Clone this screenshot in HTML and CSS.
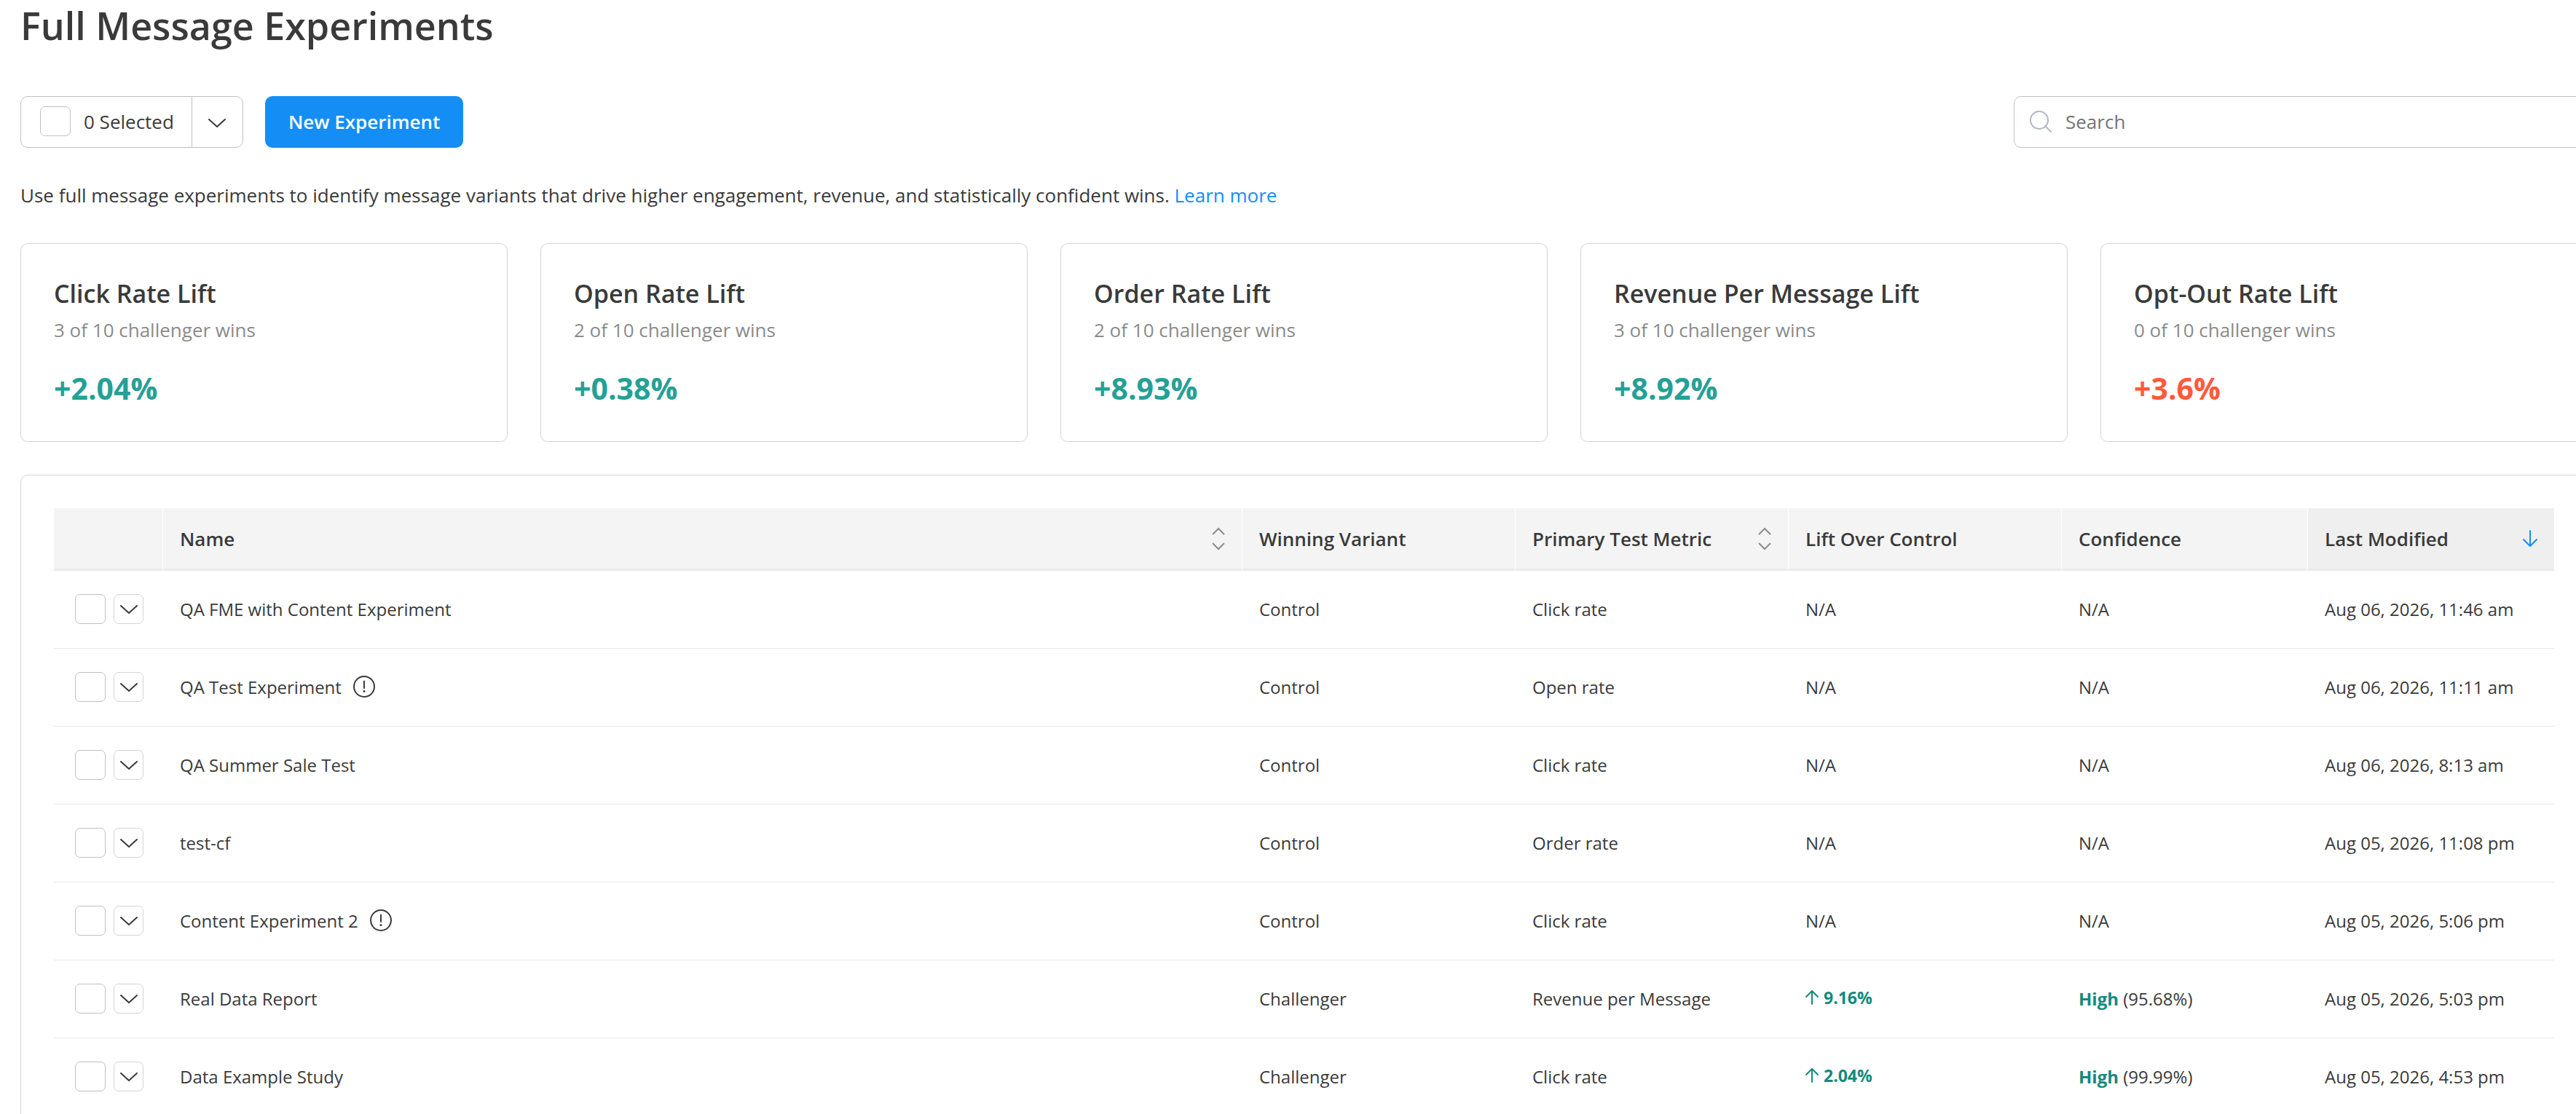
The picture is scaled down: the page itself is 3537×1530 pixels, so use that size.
FILE: index.html
```html
<!DOCTYPE html>
<html lang="en">
<head>
  <meta charset="UTF-8" />
  <meta name="viewport" content="width=device-width, initial-scale=1.0"/>
  <title>Full Message Experiments</title>
  <link rel="stylesheet" href="styles.css">
</head>
<body>
  <!-- shared icons -->
  <svg class="sprite" aria-hidden="true">
    <symbol id="chevron" viewBox="0 0 24 12">
      <path d="M1 1l11 10L23 1" fill="none" stroke="currentColor" stroke-width="2" stroke-linecap="round" stroke-linejoin="round"/>
    </symbol>
    <symbol id="sort" viewBox="0 0 18 32">
      <path d="M1 10l8-8 8 8M1 22l8 8 8-8" fill="none" stroke="currentColor" stroke-width="2"/>
    </symbol>
    <symbol id="arrow-down" viewBox="0 0 20 24">
      <path d="M10 1v21M1 13l9 9 9-9" fill="none" stroke="currentColor" stroke-width="2" stroke-linecap="round" stroke-linejoin="round"/>
    </symbol>
    <symbol id="arrow-up" viewBox="0 0 18 20">
      <path d="M9 19V1M1 9l8-8 8 8" fill="none" stroke="currentColor" stroke-width="2" stroke-linecap="round" stroke-linejoin="round"/>
    </symbol>
    <symbol id="alert" viewBox="0 0 30 30">
      <circle cx="15" cy="15" r="14" fill="none" stroke="currentColor" stroke-width="2"/>
      <path d="M15 7.500v9.500" fill="none" stroke="currentColor" stroke-width="2" stroke-linecap="round"/>
      <circle cx="15" cy="21.500" r="1.500" fill="currentColor"/>
    </symbol>
    <symbol id="search-icon" viewBox="0 0 30 30">
      <circle cx="13" cy="13" r="12" fill="none" stroke="currentColor" stroke-width="2"/>
      <path d="M21 21l8 8" fill="none" stroke="currentColor" stroke-width="2" stroke-linecap="round"/>
    </symbol>
  </svg>

  <main class="page">
    <h1>Full Message Experiments</h1>

    <div class="toolbar">
      <div class="bulk-select">
        <label class="bulk-label"><input type="checkbox" class="checkbox"> 0 Selected</label>
        <button type="button" class="bulk-toggle" aria-label="Bulk actions"><svg class="icon-chevron"><use href="#chevron"/></svg></button>
      </div>
      <button type="button" class="btn-primary">New Experiment</button>
      <label class="search">
        <svg class="icon-search"><use href="#search-icon"/></svg>
        <input type="search" placeholder="Search" aria-label="Search">
      </label>
    </div>

    <p class="intro">Use full message experiments to identify message variants that drive higher engagement, revenue, and statistically confident wins. <a href="#">Learn more</a></p>

    <div class="cards">
      <div class="card">
        <h2>Click Rate Lift</h2>
        <p class="wins">3 of 10 challenger wins</p>
        <p class="value">+2.04%</p>
      </div>
      <div class="card">
        <h2>Open Rate Lift</h2>
        <p class="wins">2 of 10 challenger wins</p>
        <p class="value">+0.38%</p>
      </div>
      <div class="card">
        <h2>Order Rate Lift</h2>
        <p class="wins">2 of 10 challenger wins</p>
        <p class="value">+8.93%</p>
      </div>
      <div class="card">
        <h2>Revenue Per Message Lift</h2>
        <p class="wins">3 of 10 challenger wins</p>
        <p class="value">+8.92%</p>
      </div>
      <div class="card">
        <h2>Opt-Out Rate Lift</h2>
        <p class="wins">0 of 10 challenger wins</p>
        <p class="value negative">+3.6%</p>
      </div>
    </div>

    <div class="panel">
      <table>
        <colgroup>
          <col class="col-actions">
          <col>
          <col class="col-wide">
          <col class="col-wide">
          <col class="col-wide">
          <col class="col-narrow">
          <col class="col-narrow">
        </colgroup>
        <thead>
          <tr>
            <th></th>
            <th><div class="head">Name <svg class="icon-sort"><use href="#sort"/></svg></div></th>
            <th>Winning Variant</th>
            <th><div class="head">Primary Test Metric <svg class="icon-sort"><use href="#sort"/></svg></div></th>
            <th>Lift Over Control</th>
            <th>Confidence</th>
            <th class="sorted"><div class="head">Last Modified <svg class="icon-down"><use href="#arrow-down"/></svg></div></th>
          </tr>
        </thead>
        <tbody>
          <tr>
            <td><div class="actions"><input type="checkbox" class="checkbox" aria-label="Select QA FME with Content Experiment"><button type="button" class="row-toggle" aria-label="Row actions"><svg class="icon-chevron"><use href="#chevron"/></svg></button></div></td>
            <td>QA FME with Content Experiment</td>
            <td>Control</td>
            <td>Click rate</td>
            <td>N/A</td>
            <td>N/A</td>
            <td>Aug 06, 2026, 11:46 am</td>
          </tr>
          <tr>
            <td><div class="actions"><input type="checkbox" class="checkbox" aria-label="Select QA Test Experiment"><button type="button" class="row-toggle" aria-label="Row actions"><svg class="icon-chevron"><use href="#chevron"/></svg></button></div></td>
            <td><div class="name">QA Test Experiment <svg class="icon-alert"><use href="#alert"/></svg></div></td>
            <td>Control</td>
            <td>Open rate</td>
            <td>N/A</td>
            <td>N/A</td>
            <td>Aug 06, 2026, 11:11 am</td>
          </tr>
          <tr>
            <td><div class="actions"><input type="checkbox" class="checkbox" aria-label="Select QA Summer Sale Test"><button type="button" class="row-toggle" aria-label="Row actions"><svg class="icon-chevron"><use href="#chevron"/></svg></button></div></td>
            <td>QA Summer Sale Test</td>
            <td>Control</td>
            <td>Click rate</td>
            <td>N/A</td>
            <td>N/A</td>
            <td>Aug 06, 2026, 8:13 am</td>
          </tr>
          <tr>
            <td><div class="actions"><input type="checkbox" class="checkbox" aria-label="Select test-cf"><button type="button" class="row-toggle" aria-label="Row actions"><svg class="icon-chevron"><use href="#chevron"/></svg></button></div></td>
            <td>test-cf</td>
            <td>Control</td>
            <td>Order rate</td>
            <td>N/A</td>
            <td>N/A</td>
            <td>Aug 05, 2026, 11:08 pm</td>
          </tr>
          <tr>
            <td><div class="actions"><input type="checkbox" class="checkbox" aria-label="Select Content Experiment 2"><button type="button" class="row-toggle" aria-label="Row actions"><svg class="icon-chevron"><use href="#chevron"/></svg></button></div></td>
            <td><div class="name">Content Experiment 2 <svg class="icon-alert"><use href="#alert"/></svg></div></td>
            <td>Control</td>
            <td>Click rate</td>
            <td>N/A</td>
            <td>N/A</td>
            <td>Aug 05, 2026, 5:06 pm</td>
          </tr>
          <tr>
            <td><div class="actions"><input type="checkbox" class="checkbox" aria-label="Select Real Data Report"><button type="button" class="row-toggle" aria-label="Row actions"><svg class="icon-chevron"><use href="#chevron"/></svg></button></div></td>
            <td>Real Data Report</td>
            <td>Challenger</td>
            <td>Revenue per Message</td>
            <td><div class="lift"><svg class="icon-up"><use href="#arrow-up"/></svg> 9.16%</div></td>
            <td><b class="high">High</b> (95.68%)</td>
            <td>Aug 05, 2026, 5:03 pm</td>
          </tr>
          <tr>
            <td><div class="actions"><input type="checkbox" class="checkbox" aria-label="Select Data Example Study"><button type="button" class="row-toggle" aria-label="Row actions"><svg class="icon-chevron"><use href="#chevron"/></svg></button></div></td>
            <td>Data Example Study</td>
            <td>Challenger</td>
            <td>Click rate</td>
            <td><div class="lift"><svg class="icon-up"><use href="#arrow-up"/></svg> 2.04%</div></td>
            <td><b class="high">High</b> (99.99%)</td>
            <td>Aug 05, 2026, 4:53 pm</td>
          </tr>
        </tbody>
      </table>
    </div>
  </main>
</body>
</html>
```
FILE: styles.css
```css
* {
  box-sizing: border-box;
}

body {
  font-family: "Open Sans", sans-serif;
  font-size: 26px;
  margin: 0;
  height: 100vh;
  overflow: hidden;
  background-color: #fff;
  color: #3a3a3a;
}

h1, h2, p {
  margin: 0;
}

button, input {
  font-family: inherit;
  font-size: inherit;
  color: inherit;
}

.sprite {
  display: none;
}

/* content is a little wider than the viewport */
.page {
  margin: 0 -16px 0 28px;
}

h1 {
  font-size: 52px;
  font-weight: 600;
  line-height: 70px;
}

.toolbar {
  display: flex;
  gap: 30px;
  height: 71px;
  margin-top: 62px;
}

.bulk-select {
  display: flex;
  border: 1px solid #c0c0c0;
  border-radius: 10px;
}

.bulk-label {
  display: flex;
  align-items: center;
  gap: 18px;
  padding: 0 24px 2px 26px;
}

.bulk-toggle {
  width: 70px;
  padding: 2px 0 0;
  border: none;
  border-left: 1px solid #c0c0c0;
  background: none;
}

.checkbox {
  appearance: none;
  width: 42px;
  height: 41px;
  margin: 0;
  border: 1px solid #c0c0c0;
  border-radius: 7px;
  background-color: #fff;
}

.btn-primary {
  padding: 0 32px 2px;
  border: none;
  border-radius: 10px;
  background-color: #148ef5;
  color: #fff;
  font-weight: 600;
}

.search {
  display: flex;
  align-items: center;
  gap: 19px;
  width: 788px;
  margin-left: auto;
  padding: 0 21px 2px;
  border: 1px solid #c0c0c0;
  border-radius: 10px;
}

.search input {
  flex: 1;
  padding: 0;
  border: none;
  background: none;
}

.search input::placeholder {
  color: #757575;
}

.intro {
  margin-top: 45px;
  line-height: 40px;
}

.intro a {
  color: #148ef5;
  text-decoration: none;
}

.cards {
  display: grid;
  grid-template-columns: repeat(5, 1fr);
  gap: 45px;
  margin-top: 46px;
}

.card, .panel {
  padding: 45px;
  border: 1px solid #d4d4d4;
  border-radius: 10px;
}

.card h2 {
  font-size: 34px;
  font-weight: 600;
  line-height: 46px;
}

.card .wins {
  margin-top: 9px;
  line-height: 36px;
  color: #8b8b8b;
}

.card .value {
  margin-top: 34px;
  font-size: 41px;
  font-weight: 700;
  line-height: 56px;
  color: #24a196;
}

.card .value.negative {
  color: #ff5a3a;
}

.panel {
  margin-top: 45px;
}

table {
  width: 100%;
  table-layout: fixed;
  border-collapse: separate;
  border-spacing: 0;
}

.col-actions {
  width: 150px;
}

.col-wide {
  width: 375px;
}

.col-narrow {
  width: 338px;
}

th {
  height: 86px;
  padding: 0 23px;
  border-right: 1px solid #fff;
  border-bottom: 3px solid #eaeaea;
  background-color: #f4f4f4;
  font-weight: 600;
  text-align: left;
}

th.sorted {
  border-right: none;
  background-color: #efefef;
}

td {
  height: 107px;
  padding: 0 0 2px 23px;
  border-bottom: 1px solid #eaeaea;
  font-size: 24px;
}

td:first-child {
  padding-left: 29px;
}

.head {
  display: flex;
  align-items: center;
  justify-content: space-between;
}

.actions {
  display: flex;
  gap: 11px;
}

.row-toggle {
  width: 41px;
  height: 41px;
  padding: 2px 0 0;
  border: 1px solid #d4d4d4;
  border-radius: 7px;
  background-color: #fff;
}

.name {
  display: flex;
  align-items: center;
  gap: 16px;
}

.lift {
  display: flex;
  align-items: center;
  gap: 7px;
  padding-bottom: 3px;
  color: #138a7e;
  font-size: 23px;
  font-weight: 700;
}

.high {
  color: #138a7e;
}

.icon-chevron {
  display: block;
  width: 24px;
  height: 12px;
  margin: 0 auto;
}

.icon-search {
  width: 30px;
  height: 30px;
  color: #b3b8c2;
}

.icon-sort {
  width: 18px;
  height: 32px;
  color: #8b8b8b;
}

.icon-down {
  width: 20px;
  height: 24px;
  color: #148ef5;
}

.icon-up {
  width: 18px;
  height: 20px;
}

.icon-alert {
  width: 30px;
  height: 30px;
}
```
